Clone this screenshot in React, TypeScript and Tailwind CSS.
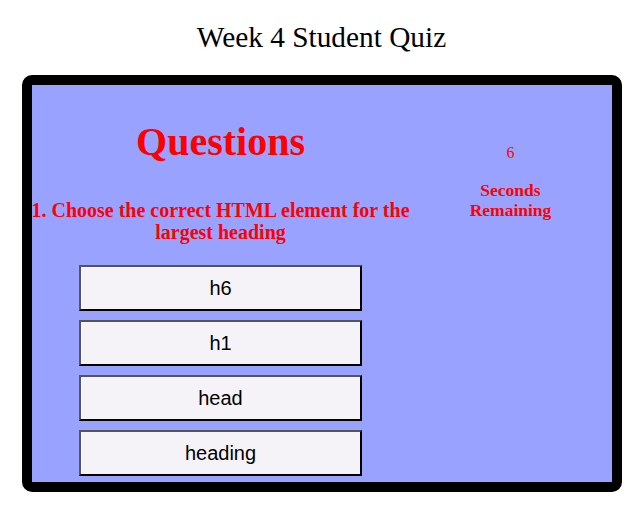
import React from "react";

const answers = ["h6", "h1", "head", "heading"];

export default function App() {
  return (
    <div className="min-h-screen bg-white font-['Liberation_Serif',serif] text-black">
      {/* Title */}
      <h1 className="pt-[20.6px] text-center text-[29.33px] font-normal leading-[normal]">
        Week 4 Student Quiz
      </h1>

      {/* Quiz box */}
      <div className="mx-auto mt-[21px] flex h-[417px] w-[600px] rounded-[10px] border-[10px] border-black bg-[#99a3ff]">
        {/* Left column */}
        <div className="flex w-[378px] flex-col items-center">
          <h2 className="mt-[33.4px] text-[40px] font-bold leading-[normal] text-[#ff0000]">
            Questions
          </h2>
          <p className="mt-[34.5px] w-[384px] shrink-0 text-center text-[20px] font-bold leading-[22px] text-[#ff0000]">
            1. Choose the correct HTML element for the largest heading
          </p>
          <div className="mt-[22px] flex flex-col gap-[9px]">
            {answers.map((a) => (
              <button
                key={a}
                className="h-[46px] w-[283px] border-2 border-t-[#555] border-l-[#555] border-b-black border-r-black bg-[#f5f3f7] font-['Liberation_Sans',Arial,sans-serif] text-[20px] text-black"
              >
                {a}
              </button>
            ))}
          </div>
        </div>

        {/* Timer column */}
        <div className="flex flex-1 flex-col items-center text-center text-[#ff0000]">
          <p className="mt-[59px] text-[16px] leading-[normal]">6</p>
          <p className="mt-[18px] text-[17.5px] font-bold leading-[20px]">
            Seconds
            <br />
            Remaining
          </p>
        </div>
      </div>
    </div>
  );
}
